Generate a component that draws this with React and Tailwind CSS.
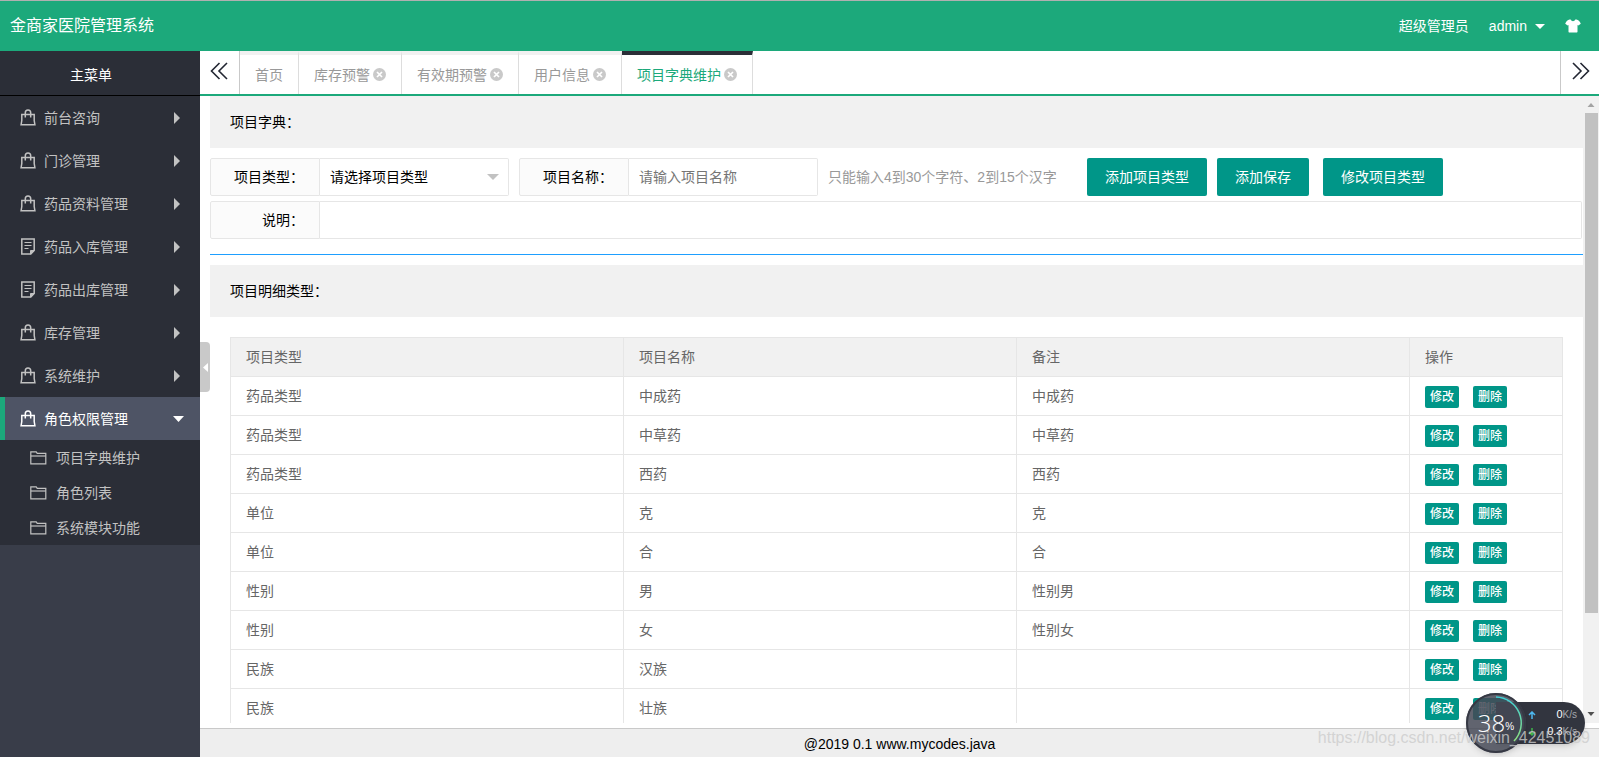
import React, { useState } from "react";

const menus = [
  { name: "前台咨询", icon: "bag" },
  { name: "门诊管理", icon: "bag" },
  { name: "药品资料管理", icon: "bag" },
  { name: "药品入库管理", icon: "note" },
  { name: "药品出库管理", icon: "note" },
  { name: "库存管理", icon: "bag" },
  { name: "系统维护", icon: "bag" },
  {
    name: "角色权限管理",
    icon: "bag",
    children: ["项目字典维护", "角色列表", "系统模块功能"],
  },
];

const tabs = ["首页", "库存预警", "有效期预警", "用户信息", "项目字典维护"];

const initialRows = [
  { id: 1, type: "药品类型", name: "中成药", remark: "中成药" },
  { id: 2, type: "药品类型", name: "中草药", remark: "中草药" },
  { id: 3, type: "药品类型", name: "西药", remark: "西药" },
  { id: 4, type: "单位", name: "克", remark: "克" },
  { id: 5, type: "单位", name: "合", remark: "合" },
  { id: 6, type: "性别", name: "男", remark: "性别男" },
  { id: 7, type: "性别", name: "女", remark: "性别女" },
  { id: 8, type: "民族", name: "汉族", remark: "" },
  { id: 9, type: "民族", name: "壮族", remark: "" },
];

const BagIcon = () => (
  <svg width="16" height="17" viewBox="0 0 16 17" fill="none" stroke="currentColor" strokeWidth="1.5">
    <path d="M1.800 5.500h12.400v6l.7 4.200H1.100l.7-4.200z" />
    <path d="M5.300 8.500V3.800C5.300 2 6.300 1 8 1s2.700 1 2.700 2.800v4.700" />
  </svg>
);

const NoteIcon = () => (
  <svg width="16" height="17" viewBox="0 0 16 17" fill="none" stroke="currentColor" strokeWidth="1.5">
    <path d="M1.800 1h12.400v11.500L10.800 16h-9z" />
    <path d="M4.500 4.500h7M4.500 7.500h7M4.500 10.500h4" strokeWidth="1.2" />
    <path d="M10.500 16v-3.500h3.700z" fill="currentColor" strokeWidth="1" />
  </svg>
);

const FolderIcon = () => (
  <svg width="17" height="14" viewBox="0 0 17 14" fill="none" stroke="currentColor" strokeWidth="1.2">
    <path d="M.8 12.800V.8h5.400l1 1.600h8.600v10.400z" />
    <path d="M.8 5h15" />
  </svg>
);

const CloseIcon = () => (
  <svg width="13" height="13" viewBox="0 0 13 13">
    <circle cx="6.500" cy="6.500" r="6.500" fill="#c9c9c9" />
    <path d="M4 4l5 5M9 4l-5 5" stroke="#fff" strokeWidth="1.700" />
  </svg>
);

const ShirtIcon = () => (
  <svg width="16" height="14" viewBox="0 0 16 14" fill="currentColor">
    <path d="M4.500.5h1.200C6.200 1.700 7 2.200 8 2.200s1.800-.5 2.300-1.700h1.200c1.700.3 3.300 1.600 4.300 4.300l-2.500 1.700-.8-.6v6.600c0 .6-.3 1-1 1h-7c-.7 0-1-.4-1-1V5.900l-.8.6L.2 4.800C1.200 2.100 2.800.8 4.500.5z" />
  </svg>
);

const DoubleArrow = ({ right }) => (
  <svg width="18" height="18" viewBox="0 0 18 18" fill="none" stroke="#222632" strokeWidth="1.600">
    {right ? <path d="M1 1l8 8-8 8M8.500 1l8 8-8 8" /> : <path d="M9.500 1l-8 8 8 8M17 1L9 9l8 8" />}
  </svg>
);

const Sidebar = () => {
  const [open, setOpen] = useState("角色权限管理");

  return (
    <nav className="w-[200px] shrink-0 bg-[#393d49] text-[#c2c2c2]">
      <div className="flex h-[45px] items-center justify-center border-b border-black bg-[#2b2e37] pr-[18px] pt-[3px] text-white">
        主菜单
      </div>
      <ul className="bg-[#2b2e37]">
        {menus.map((menu) => {
          const active = menu.name === open;
          return (
            <li key={menu.name}>
              <button
                type="button"
                onClick={() => setOpen(active ? "" : menu.name)}
                className={`flex h-[43px] w-full items-center border-l-[5px] pl-[15px] pr-4 ${
                  active ? "border-[#1ca97b] bg-[#4e5465] text-white" : "border-transparent"
                }`}
              >
                {menu.icon === "bag" ? <BagIcon /> : <NoteIcon />}
                <span className="ml-2 grow text-left">{menu.name}</span>
                {active ? (
                  <svg width="11" height="6" viewBox="0 0 11 6" fill="currentColor">
                    <path d="M0 0h11L5.500 6z" />
                  </svg>
                ) : (
                  <svg width="10" height="12" viewBox="0 0 10 12" fill="currentColor">
                    <path d="M0 0l6 6-6 6z" />
                  </svg>
                )}
              </button>
              {active && menu.children && (
                <ul>
                  {menu.children.map((child) => (
                    <li key={child}>
                      <a href="#" className="flex h-[35px] items-center gap-[9px] pl-[30px]">
                        <FolderIcon />
                        {child}
                      </a>
                    </li>
                  ))}
                </ul>
              )}
            </li>
          );
        })}
      </ul>
    </nav>
  );
};

const TabBar = () => {
  const [current, setCurrent] = useState("项目字典维护");

  return (
    <div className="flex h-[45px] shrink-0 border-b-2 border-[#1ca97b] bg-white">
      <button type="button" aria-label="向左" className="flex w-10 border-r border-[#c9c9c9] pl-[10px] pt-[11px]">
        <DoubleArrow />
      </button>
      <div className="flex grow">
        {tabs.map((tab, i) => (
          <button
            type="button"
            key={tab}
            onClick={() => setCurrent(tab)}
            className={`flex items-center gap-[3px] border-r border-t-4 border-r-[#dddddd] px-[15px] ${
              tab === current ? "border-t-[#2b2e37] text-[#1ca97b]" : "border-t-[#f1f1f1] text-[#999999]"
            }`}
          >
            {tab}
            {i > 0 && <CloseIcon />}
          </button>
        ))}
      </div>
      <button type="button" aria-label="向右" className="flex w-[39px] border-l border-[#c9c9c9] pl-[11px] pt-[11px]">
        <DoubleArrow right />
      </button>
    </div>
  );
};

const labelStyle =
  "flex w-[110px] shrink-0 items-center justify-end rounded-l-xs border border-[#e6e6e6] bg-[#fbfbfb] pr-[15px]";
const fieldStyle = "h-full w-full rounded-r-xs border border-l-0 border-[#e6e6e6] bg-white px-[10px] outline-none";
const buttonStyle = "h-[38px] rounded-xs bg-[#009688] px-[18px] text-white";

const DictForm = () => {
  const [name, setName] = useState("");
  const [desc, setDesc] = useState("");

  return (
    <form className="flex flex-col gap-[5px] pr-px" onSubmit={(e) => e.preventDefault()}>
      <div className="flex items-center">
        <div className="flex h-[38px] w-[299px]">
          <label htmlFor="type" className={labelStyle}>项目类型：</label>
          <div className="relative grow">
            <select id="type" className={`${fieldStyle} appearance-none`}>
              <option>请选择项目类型</option>
              <option>药品类型</option>
              <option>单位</option>
              <option>性别</option>
              <option>民族</option>
            </select>
            <svg className="pointer-events-none absolute right-[10px] top-4" width="12" height="6" viewBox="0 0 12 6">
              <path d="M0 0h12L6 6z" fill="#c2c2c2" />
            </svg>
          </div>
        </div>
        <div className="ml-[10px] flex h-[38px] w-[299px]">
          <label htmlFor="name" className={labelStyle}>项目名称：</label>
          <input
            id="name"
            value={name}
            onChange={(e) => setName(e.target.value)}
            placeholder="请输入项目名称"
            className={`${fieldStyle} placeholder:text-[#757575]`}
          />
        </div>
        <span className="ml-[10px] w-[259px] text-[#999999]">只能输入4到30个字符、2到15个汉字</span>
        <button type="button" className={buttonStyle}>添加项目类型</button>
        <button type="submit" className={`${buttonStyle} ml-[10px]`}>添加保存</button>
        <button type="button" className={`${buttonStyle} ml-[14px]`}>修改项目类型</button>
      </div>
      <div className="flex h-[38px]">
        <label htmlFor="desc" className={labelStyle}>说明：</label>
        <input id="desc" value={desc} onChange={(e) => setDesc(e.target.value)} className={fieldStyle} />
      </div>
    </form>
  );
};

const DictTable = () => {
  const [rows, setRows] = useState(initialRows);
  const cell = "border border-[#e6e6e6] px-[15px]";
  const smallButton = "h-[22px] rounded-xs bg-[#009688] px-[5px] text-xs font-medium text-white";

  return (
    <table className="w-full table-fixed border-collapse text-[#666666]">
      <colgroup>
        <col />
        <col />
        <col />
        <col className="w-[153px]" />
      </colgroup>
      <thead>
        <tr className="h-[39px] bg-[#f1f1f1] text-left">
          <th className={`${cell} font-normal`}>项目类型</th>
          <th className={`${cell} font-normal`}>项目名称</th>
          <th className={`${cell} font-normal`}>备注</th>
          <th className={`${cell} font-normal`}>操作</th>
        </tr>
      </thead>
      <tbody>
        {rows.map((row) => (
          <tr key={row.id} className="h-[39px]">
            <td className={cell}>{row.type}</td>
            <td className={cell}>{row.name}</td>
            <td className={cell}>{row.remark}</td>
            <td className={cell}>
              <div className="flex gap-[14px] pt-[2px]">
                <button type="button" className={smallButton}>修改</button>
                <button
                  type="button"
                  className={smallButton}
                  onClick={() => setRows(rows.filter((r) => r.id !== row.id))}
                >
                  删除
                </button>
              </div>
            </td>
          </tr>
        ))}
      </tbody>
    </table>
  );
};

const ScrollBar = () => (
  <div className="flex w-4 shrink-0 flex-col items-center bg-[#f1f1f1]">
    <svg className="shrink-0" width="16" height="17" viewBox="0 0 16 17">
      <path d="M4.500 11h7L8 7z" fill="#a3a3a3" />
    </svg>
    <div className="h-[500px] w-[13px] bg-[#c1c1c1]" />
    <svg className="mt-auto shrink-0" width="16" height="17" viewBox="0 0 16 17">
      <path d="M4.500 6h7L8 10z" fill="#505050" />
    </svg>
  </div>
);

// floating memory / network monitor
const Monitor = () => (
  <div className="absolute bottom-1 right-[14px] flex items-center">
    <div className="relative z-10 -mr-[30px] flex h-[60px] w-[60px] items-center justify-center rounded-full bg-[#454956]/85 text-white shadow-md">
      <svg className="absolute inset-0" width="60" height="60" viewBox="0 0 60 60" fill="none">
        <circle cx="30" cy="30" r="29" stroke="#363944" strokeWidth="2" />
        <path d="M30 4a26 26 0 0 1 18 44" stroke="url(#ring)" strokeWidth="1.500" />
        <defs>
          <linearGradient id="ring" x1="0" y1="0" x2="0" y2="1">
            <stop offset="0" stopColor="#3fd0d8" />
            <stop offset="1" stopColor="#8ee07f" />
          </linearGradient>
        </defs>
      </svg>
      <span className="font-['Open_Sans'] text-2xl font-light">38</span>
      <span className="mt-2 text-[10px]">%</span>
    </div>
    <div className="flex h-[42px] w-[89px] flex-col justify-between rounded-r-full bg-[#32353f] py-1 pl-8 pr-2 text-[11px] leading-4 text-white shadow-md">
      <div className="flex items-center justify-between">
        <svg width="8" height="8" viewBox="0 0 8 8" fill="none" stroke="#4db8f0" strokeWidth="1.500">
          <path d="M4 8V1M1 4l3-3 3 3" />
        </svg>
        <span>0<span className="text-[10px] text-[#a5a7ad]">K/s</span></span>
      </div>
      <div className="flex items-center justify-between">
        <svg width="8" height="8" viewBox="0 0 8 8" fill="none" stroke="#3eb54a" strokeWidth="1.500">
          <path d="M4 0v7M1 4l3 3 3-3" />
        </svg>
        <span>0.3<span className="text-[10px] text-[#a5a7ad]">K/s</span></span>
      </div>
    </div>
  </div>
);

const App = () => {
  return (
    <div className="relative flex h-screen flex-col overflow-hidden bg-white font-['Liberation_Sans','Noto_Sans_CJK_SC',sans-serif] text-sm text-black">
      <header className="flex h-[51px] shrink-0 items-center justify-between border-t border-[#b0b0b0] bg-[#1ca97b] pl-[10px] pr-[18px] text-white">
        <h1 className="text-base">金商家医院管理系统</h1>
        <div className="flex items-center gap-5">
          <span>超级管理员</span>
          <button type="button" className="flex items-center gap-2">
            admin
            <svg width="10" height="5" viewBox="0 0 10 5" fill="currentColor">
              <path d="M0 0h10L5 5z" />
            </svg>
          </button>
          <button type="button" aria-label="换肤">
            <ShirtIcon />
          </button>
        </div>
      </header>

      <div className="flex min-h-0 grow">
        <Sidebar />
        <div className="relative flex min-w-0 grow flex-col">
          <TabBar />
          <div className="flex min-h-0 grow pl-[10px]">
            <main className="min-w-0 grow overflow-hidden">
              <h2 className="flex h-[52px] items-center bg-[#f1f1f1] px-5">项目字典：</h2>
              <div className="py-[10px]">
                <DictForm />
              </div>
              <hr className="mb-[10px] mt-[5px] border-[#1e9fff]" />
              <h2 className="flex h-[52px] items-center bg-[#f1f1f1] px-5">项目明细类型：</h2>
              <div className="p-5">
                <DictTable />
              </div>
            </main>
            <ScrollBar />
          </div>
          <footer className="mt-[5px] flex h-[29px] shrink-0 items-center justify-center border-t border-[#c9c9c9] bg-[#eeeeee] pt-[2px]">
            @2019 0.1 www.mycodes.java
          </footer>
          <button
            type="button"
            aria-label="收起菜单"
            className="absolute left-0 top-[291px] flex h-[50px] w-[10px] items-center justify-end rounded-r bg-[#c9c9c9] pr-[2px]"
          >
            <svg width="5" height="9" viewBox="0 0 5 9" fill="#fff">
              <path d="M5 0v9L0 4.500z" />
            </svg>
          </button>
        </div>
      </div>

      <Monitor />
      <div className="pointer-events-none absolute bottom-[7px] right-[9px] z-20 text-base text-[#cccccc]/80">
        https://blog.csdn.net/weixin_42451089
      </div>
    </div>
  );
};

export default App;
